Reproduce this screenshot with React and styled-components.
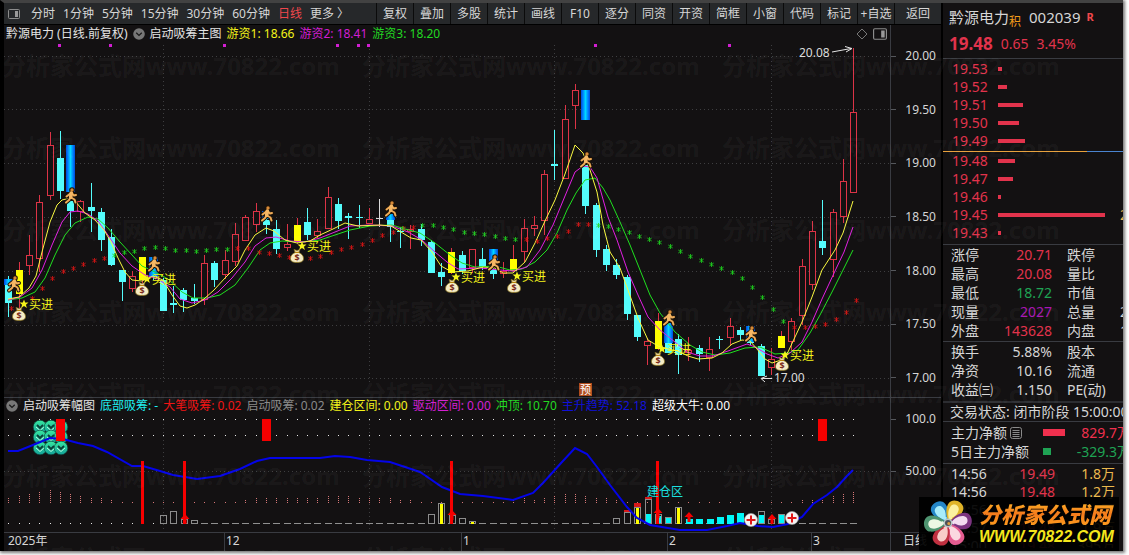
import React from 'react';
import styled, { createGlobalStyle, css } from 'styled-components';

const colors = {
  bg: '#131112',
  line: '#393b41',
  text: '#d6d6d6',
  red: '#e2334c',
  green: '#1fa354',
  cyan: '#54fcfc',
  yellow: '#ffff00',
  magenta: '#d21ed2',
  lime: '#22d822',
  gold: '#ecb94e',
};

const GlobalStyle = createGlobalStyle`
  * {
    box-sizing: border-box;
  }

  body {
    margin: 0;
    background: #fff;
    color: ${colors.text};
    font-family: 'Noto Sans', 'Noto Sans CJK SC', sans-serif;
    font-size: 12px;
    line-height: 16px;
  }

  svg {
    display: block;
    flex-shrink: 0;
  }

  svg text {
    font-family: 'Noto Sans', 'Noto Sans CJK SC', sans-serif;
  }
`;

const Frame = styled.div`
  position: relative;
  display: flex;
  overflow: hidden;
  background: ${colors.bg};
  border-top: 3px solid #424242;
  border-left: 4px solid #000;
`;

const Page = styled.div`
  overflow: hidden;
  padding-bottom: 4px;
`;

const Shadow = styled.div`
  margin-right: 6px;
  box-shadow: 1px 1px 3px 1px #777;
`;

const LeftPane = styled.main`
  flex: 1;
  min-width: 0;
`;

const Toolbar = styled.nav`
  display: flex;
  height: 22px;
  background: #0b0b0b;
  border-bottom: 1px solid #000;
`;

const Periods = styled.div`
  display: flex;
  flex: 1;
  align-items: center;
  gap: 8px;
  padding-left: 4px;
  background: #26282a;
  white-space: nowrap;

  svg {
    margin-right: 3px;
  }
`;

const PeriodButton = styled.button`
  padding: 0;
  border: 0;
  background: none;
  color: ${({ $active }) => ($active ? '#f0474c' : colors.text)};
  font: inherit;
`;

const Tools = styled.div`
  display: flex;
  gap: 1px;
  padding-left: 1px;
`;

const ToolButton = styled.button`
  width: ${({ $wide }) => ($wide ? 46 : 36)}px;
  padding: 0;
  border: 0;
  background: #26282a;
  color: ${colors.text};
  font: inherit;
  white-space: nowrap;
`;

const Panel = styled.section`
  display: flex;
  border-bottom: 1px solid ${colors.line};
`;

const Plot = styled.div`
  flex: 1;
  min-width: 0;
`;

const Legend = styled.header`
  display: flex;
  align-items: center;
  gap: 5px;
  height: ${({ $height }) => $height}px;
  padding: 0 3px 0 2px;
  white-space: nowrap;
`;

const LegendItem = styled.span`
  color: ${({ $color }) => $color || '#e4e4e4'};
`;

const Spacer = styled.div`
  flex: 1;
`;

const Chart = styled.svg`
  width: 100%;
  height: auto;
`;

const Axis = styled.div`
  display: flex;
  flex-direction: column;
  justify-content: space-between;
  width: 51px;
  padding: ${({ $pad }) => $pad};
  border-left: 1px solid ${colors.line};
`;

const AxisLabel = styled.div`
  display: flex;
  align-items: center;
  justify-content: space-between;
  padding-right: 5px;

  &::before {
    content: '';
    width: 5px;
    height: 1px;
    background: #55575c;
  }
`;

const DateAxis = styled.div`
  display: flex;
  height: 18px;
`;

const Months = styled.div`
  display: grid;
  flex: 1;
  grid-template-columns: 220fr 237fr 206fr 144fr 79fr;
`;

const Month = styled.span`
  padding-left: 1px;
  border-left: 1px solid ${colors.line};

  &:first-child {
    padding-left: 4px;
    border-left: 0;
  }
`;

const PeriodLabel = styled.span`
  width: 51px;
  padding-left: 12px;
  border-left: 1px solid ${colors.line};
  white-space: nowrap;
`;

const QuotePane = styled.aside`
  width: 182px;
  overflow: hidden;
  border-left: 2px solid #000;
  font-size: 14px;
`;

const QuoteHeader = styled.header`
  height: 56px;
  padding-left: 6px;
  border-bottom: 1px solid ${colors.line};
`;

const NameRow = styled.div`
  display: flex;
  align-items: center;
  height: 28px;
  font-size: 15px;
  line-height: 28px;
`;

const TagText = styled.span`
  align-self: flex-end;
  margin-right: 8px;
  color: #f09a1a;
  font-size: 12px;
  line-height: 18px;
`;

const MarketFlag = styled.b`
  padding-left: 6px;
  color: #f0474c;
  font-size: 11px;
`;

const PriceRow = styled.div`
  display: flex;
  align-items: center;
  gap: 8px;
  height: 25px;
  color: ${colors.red};

  b {
    font-size: 17px;
  }
`;

const OrderRows = styled.div`
  padding: ${({ $pad }) => $pad};
`;

const BookDivider = styled.div`
  height: 1px;
  background: linear-gradient(90deg, #e8a13c 80%, #4a84d0 80%);
`;

const BookRow = styled.div`
  display: grid;
  grid-template-columns: 46px 122px 20px;
  align-items: center;
  height: 18px;
  padding-left: 9px;
  color: ${colors.red};
`;

const VolumeBar = styled.div`
  height: 4px;
  background: ${colors.red};
`;

const Volume = styled.span`
  color: ${colors.gold};
`;

const StatsTable = styled.table`
  width: 240px;
  margin-top: 1px;
  border-collapse: collapse;
  border-top: 1px solid ${colors.line};
  table-layout: fixed;

  th,
  td {
    height: 19px;
    padding: 0;
    font-weight: normal;
    line-height: 19px;
    text-align: left;
    white-space: nowrap;
  }

  th:first-child {
    width: 52px;
    padding-left: 8px;
  }

  td:nth-child(2) {
    width: 57px;
    text-align: right;
  }

  th:nth-child(3) {
    width: 68px;
    padding-left: 15px;
  }
`;

const StatValue = styled.td`
  color: ${({ $color }) => $color || colors.text};
`;

const Status = styled.div`
  height: 21px;
  margin-top: 2px;
  padding-left: 7px;
  border-top: 2px solid #2c2d31;
  border-bottom: 1px solid ${colors.line};
  line-height: 18px;
  white-space: nowrap;
`;

const FlowRows = styled.div`
  padding: 1px 0 2px;
  border-bottom: 1px solid ${colors.line};
`;

const FlowRow = styled.div`
  display: grid;
  grid-template-columns: 92px 25px 63px;
  align-items: center;
  height: 19px;
  padding-left: 8px;
  color: ${({ $color }) => $color};
  white-space: nowrap;
`;

const FlowLabel = styled.span`
  display: flex;
  align-items: center;
  gap: 3px;
  color: ${colors.text};
`;

const FlowBar = styled.div`
  height: 7px;
  background: currentColor;
`;

const FlowValue = styled.span`
  text-align: right;
`;

const TickTable = styled.table`
  width: 172px;
  margin-top: 1px;
  border-collapse: collapse;

  td {
    height: 18px;
    padding: 0;
    line-height: 18px;
    text-align: right;
  }

  td:nth-child(1) {
    width: 52px;
    padding-left: 8px;
    text-align: left;
  }

  td:nth-child(2) {
    color: ${colors.red};
  }

  td:nth-child(3) {
    width: 60px;
    color: ${colors.gold};
  }
`;

// ticks past the bottom edge are cut off, not pushing the frame taller
const TickArea = styled.div`
  height: 84px;
  overflow: hidden;
`;

const Watermark = styled.div`
  position: absolute;
  inset: 22px 0 0 -2px;
  overflow: hidden;
  color: rgba(255, 255, 255, 0.05);
  font-size: 24px;
  font-weight: bold;
  line-height: 82px;
  pointer-events: none;
  white-space: nowrap;
`;

const WatermarkRow = styled.div`
  display: flex;
  height: 82px;

  span {
    flex: 0 0 360px;
  }
`;

const SiteLogo = styled.a`
  position: absolute;
  right: 4px;
  bottom: 0;
  display: flex;
  align-items: center;
  gap: 2px;
  width: 200px;
  height: 54px;
  background: rgba(0, 0, 0, 0.93);
  text-decoration: none;
`;

const gradientText = css`
  background: linear-gradient(#ffb627, #f47a1c 50%, #ffa01e);
  background-clip: text;
  -webkit-background-clip: text;
  color: transparent;
`;

const LogoName = styled.div`
  ${gradientText}
  font-size: 22px;
  font-style: italic;
  font-weight: 900;
  line-height: 26px;
`;

const LogoUrl = styled.div`
  color: #f4e61c;
  font-family: 'Liberation Sans', sans-serif;
  font-size: 16px;
  font-style: italic;
  font-weight: bold;
  line-height: 20px;
`;

const periods = ['分时', '1分钟', '5分钟', '15分钟', '30分钟', '60分钟', '日线', '更多 〉'];
const tools = ['复权', '叠加', '多股', '统计', '画线', 'F10', '逐分', '同资', '开资', '简框', '小窗', '代码', '标记', '+自选', '返回'];

const mainLegend = [
  ['游资1: 18.66', '#f4f41a'],
  ['游资2: 18.41', colors.magenta],
  ['游资3: 18.20', colors.lime],
];

const subLegend = [
  ['底部吸筹: -', '#1cf0f0'],
  ['大笔吸筹: 0.02', '#f01414'],
  ['启动吸筹: 0.02', '#8a8a8a'],
  ['建仓区间: 0.00', '#f4f41a'],
  ['驱动区间: 0.00', colors.magenta],
  ['冲顶: 10.70', colors.lime],
  ['主升趋势: 52.18', '#1010d8'],
  ['超级大牛: 0.00', '#fff'],
];

// kind, high, body top, body bottom, low
const candles = [
  ['c', 276, 279, 303, 317], ['y', 262, 270, 294, 308], ['r', 235, 255, 266, 275], ['r', 195, 202, 259, 272],
  ['r', 132, 145, 196, 200], ['c', 131, 158, 191, 199], ['c', 192, 201, 211, 227], ['r', 200, 201, 212, 222],
  ['c', 183, 207, 211, 232], ['c', 208, 212, 240, 251], ['c', 229, 237, 265, 266], ['c', 270, 270, 282, 301],
  ['r', 271, 276, 289, 292], ['y', 257, 257, 280, 284], ['c', 257, 269, 275, 280], ['c', 278, 280, 311, 311],
  ['c', 286, 303, 305, 313], ['c', 288, 290, 300, 312], ['c', 284, 298, 301, 304], ['r', 255, 263, 300, 305],
  ['c', 261, 263, 280, 287], ['r', 250, 260, 275, 279], ['r', 223, 234, 262, 266], ['r', 215, 217, 241, 241],
  ['r', 203, 211, 225, 232], ['c', 214, 220, 225, 234], ['c', 220, 229, 249, 254], ['r', 224, 244, 248, 251],
  ['y', 218, 225, 242, 244], ['c', 208, 222, 235, 240], ['r', 219, 231, 236, 238], ['r', 187, 197, 229, 229],
  ['c', 198, 204, 221, 229], ['c', 213, 216, 218, 239], ['c', 205, 217, 218, 228], ['r', 208, 219, 224, 224],
  ['w', 199, 218, 219, 227], ['c', 214, 215, 227, 242], ['c', 227, 231, 232, 248], ['r', 225, 229, 232, 249],
  ['c', 224, 229, 240, 246], ['c', 240, 242, 273, 273], ['c', 263, 272, 277, 286], ['y', 248, 252, 273, 274],
  ['c', 251, 255, 271, 274], ['r', 249, 249, 268, 273], ['c', 248, 259, 267, 270], ['c', 249, 269, 274, 279],
  ['r', 262, 271, 274, 278], ['y', 245, 259, 271, 272], ['r', 219, 228, 252, 262], ['r', 216, 225, 229, 236],
  ['r', 170, 174, 221, 235], ['c', 130, 164, 166, 180], ['r', 105, 119, 179, 179], ['r', 84, 90, 106, 129],
  ['c', 152, 165, 206, 214], ['c', 203, 205, 250, 257], ['c', 245, 249, 265, 271], ['c', 259, 265, 275, 279],
  ['c', 275, 277, 314, 320], ['c', 315, 315, 337, 341], ['r', 338, 341, 346, 365], ['y', 313, 321, 349, 350],
  ['c', 323, 342, 353, 353], ['c', 334, 339, 355, 374], ['r', 337, 350, 353, 361], ['c', 345, 348, 354, 362],
  ['r', 337, 349, 358, 371], ['c', 336, 339, 340, 349], ['r', 318, 326, 338, 346], ['c', 327, 330, 335, 340],
  ['c', 326, 341, 343, 345], ['c', 344, 346, 376, 376], ['r', 348, 359, 368, 375], ['y', 331, 336, 348, 348],
  ['r', 318, 321, 342, 350], ['r', 259, 266, 316, 325], ['r', 221, 231, 285, 290], ['c', 200, 241, 248, 255],
  ['r', 209, 212, 260, 277], ['r', 159, 181, 217, 223], ['r', 48, 112, 193, 193],
];

const candleColors = { c: colors.cyan, r: '#dc3346', y: colors.yellow, w: '#dadada' };
const candleX = (i) => Math.round(8.3 + 10.305 * i);

const yellowLine = '8,299 19,297 29,288 36,276 42,252 50,222 57,205 62,200 70,198 75,201 85,213 95,220 104,230 111,242 118,258 125,272 132,280 142,281 153,276 163,280 172,295 180,306 187,308 195,305 204,299 214,290 225,278 237,266 245,250 255,235 266,228 274,231 285,240 297,243 310,241 320,235 333,229 345,223 358,226 380,225 391,226 401,232 411,238 421,240 432,252 441,266 452,272 468,271 483,267 495,268 503,273 513,273 525,262 535,243 545,221 555,200 565,174 575,145 583,153 590,170 597,192 603,225 610,252 620,268 628,290 638,318 648,340 658,346 668,349 678,351 688,356 698,359 712,358 722,353 732,344 742,340 750,341 757,349 765,359 772,363 781,360 788,352 802,322 812,297 822,270 835,250 843,233 853,201';
const magentaLine = '8,300 20,297 32,288 42,270 52,245 62,222 70,212 78,211 88,214 98,221 110,238 120,253 132,266 145,275 158,279 170,287 180,299 192,303 205,300 218,292 232,278 245,262 255,246 266,238 276,237 290,241 305,242 320,238 335,232 350,226 370,225 392,226 408,232 422,240 435,252 447,262 458,269 480,268 500,270 513,271 527,267 540,250 553,225 565,196 575,172 583,166 590,167 597,178 608,217 617,240 628,272 638,295 648,317 660,330 670,338 687,352 700,356 713,356 728,351 747,344 755,347 767,354 778,358 790,353 802,342 812,322 822,299 835,271 844,252 853,227';
const greenLine = '8,300 22,298 35,292 45,278 55,255 65,235 75,223 88,217 98,219 108,228 120,242 132,255 142,266 155,272 168,279 182,292 193,298 207,298 220,295 235,285 248,268 260,250 270,243 282,241 300,242 320,240 335,235 350,230 370,226 392,225 405,229 420,233 435,243 450,255 462,263 475,267 495,266 510,270 522,269 535,262 547,250 557,233 567,210 576,193 585,180 595,178 603,188 610,200 620,222 630,245 640,270 650,295 660,313 675,332 690,345 702,352 715,355 730,353 745,348 760,347 775,354 788,353 798,350 810,333 820,315 832,292 843,270 853,250';
const trendLine = '8,451 18,451 33,445 50,438 63,439 78,443 93,446 107,452 132,466 143,466 160,471 173,475 197,479 220,476 240,469 257,461 270,458 320,458 335,456 350,457 367,460 390,462 420,472 442,487 460,494 483,496 513,500 533,493 543,483 562,462 575,448 587,454 597,467 610,485 627,507 637,518 650,525 680,530 707,530 727,526 740,523 758,526 773,527 788,524 802,517 813,504 827,495 837,487 847,476 853,470';

const redStars = [
  [11, 308], [32, 298], [42, 288], [52, 278], [63, 271], [73, 268], [83, 264], [94, 260], [104, 258],
  [237, 248], [248, 248], [259, 252], [269, 253], [279, 255], [289, 257], [300, 258], [310, 258], [320, 256],
  [331, 252], [341, 249], [351, 247], [362, 244], [372, 240], [382, 235], [393, 232], [403, 228], [413, 227],
  [526, 239], [537, 241], [547, 238], [557, 236], [568, 231], [578, 224], [588, 224],
  [794, 327], [805, 327], [815, 326], [825, 324], [836, 319], [846, 312], [856, 300],
];
const greenStars = [
  [114, 255], [124, 252], [134, 251], [144, 248], [155, 247], [165, 248], [175, 250], [186, 250], [196, 251],
  [206, 250], [216, 249], [227, 249], [402, 228], [422, 225], [433, 225], [443, 227], [453, 229], [464, 232],
  [474, 233], [484, 234], [495, 236], [505, 238], [515, 239], [598, 225], [608, 226], [618, 229], [629, 232],
  [639, 236], [649, 239], [659, 242], [670, 246], [680, 251], [690, 256], [701, 260], [711, 264], [721, 268],
  [732, 272], [742, 278], [752, 287], [762, 297], [773, 309], [783, 321],
];

const blueBars = [[8, 279, 6], [70, 145, 47], [153, 257, 20], [266, 211, 8], [390, 214, 6], [493, 249, 16], [585, 90, 30], [668, 323, 20], [750, 326, 16]];
const runners = [[14, 284], [71, 196], [154, 264], [267, 214], [391, 209], [494, 263], [586, 160], [669, 318], [751, 334]];
const bags = [[19, 314], [142, 289], [297, 256], [452, 286], [514, 286], [658, 359], [782, 364]];
const buys = [[25, 304], [148, 279], [303, 246], [457, 277], [518, 276], [663, 349], [786, 355]];

// x, top, fill ('' for outline only)
const volumeBars = [
  [163, 515, ''], [173, 511, ''], [184, 519, ''], [194, 520, ''],
  [431, 514, ''], [441, 503, colors.yellow], [452, 515, ''], [462, 518, ''], [472, 521, colors.yellow],
  [616, 518, ''], [627, 512, ''], [637, 507, colors.yellow], [648, 499, ''], [658, 514, ''],
  [668, 517, ''], [678, 507, colors.yellow], [761, 511, ''], [771, 519, ''], [781, 514, ''],
];
const cyanBars = [[648, 514], [658, 516], [668, 518], [689, 519], [699, 519], [710, 519], [720, 517], [730, 515], [740, 513], [761, 515], [781, 514]];
const redArrows = [[185, 514], [452, 510], [658, 508], [689, 512], [772, 514]];
const momentum = [6, 7, 9, 11, 14, 12, 9, 7, 6, 5, 3, 2, 2, 2, 1, 1, 1, 1, 1, 1, 1, 2, 2, 3, 5, 5, 5, 5, 5, 5, 6, 7, 8, 7, 6, 5, 5, 5, 4, 3, 2, 1, 1, 1, 1, 1, 1, 1, 1, 3, 5, 4, 6, 7, 9, 10, 7, 6, 5, 3, 2, 2, 1, 1, 1, 1, 1, 1, 1, 1, 1, 1, 1, 1, 1, 1, 2, 3, 4, 4, 7, 9, 12];

const asks = [['19.53', 4], ['19.52', 9], ['19.51', 25], ['19.50', 21], ['19.49', 27]];
const bids = [['19.48', 17], ['19.47', 15], ['19.46', 3], ['19.45', 107, '2'], ['19.43', 3]];

const priceStats = [
  ['涨停', '20.71', colors.red, '跌停'],
  ['最高', '20.08', colors.red, '量比'],
  ['最低', '18.72', colors.green, '市值'],
  ['现量', '2027', '#a815b4', '总量', '2'],
  ['外盘', '143628', colors.red, '内盘', '1'],
];
const baseStats = [
  ['换手', '5.88%', '', '股本'],
  ['净资', '10.16', '', '流通'],
  ['收益㈢', '1.150', '', 'PE(动)'],
];
const ticks = [
  ['14:56', '19.49', '1.8万'],
  ['14:56', '19.48', '1.2万'],
  ['14:56', '19.49', '1.3万'],
  ['14:57', '19.48', '1.9万'],
  ['15:00', '19.48', '395万'],
];

const LayoutIcon = ({ size = 12 }) => (
  <svg width={size} height={size} viewBox="0 0 12 12" fill="none" stroke="#8c8c8c">
    <rect x="0.5" y="1.5" width="11" height="9" rx="1" />
    <rect x="7" y="3" width="3" height="6" fill="#9a9a9a" stroke="none" />
  </svg>
);

const ChevronIcon = () => (
  <svg width="12" height="12" viewBox="0 0 13 13">
    <circle cx="6.5" cy="6.5" r="6.3" fill="#777" />
    <path d="M3.5 5.2 6.5 8l3-2.8" fill="none" stroke="#1a1a1a" strokeWidth="1.4" />
  </svg>
);

const DiamondIcon = () => (
  <svg width="12" height="12" viewBox="0 0 12 12">
    <path d="M6 1 11 6 6 11 1 6Z" fill="none" stroke="#777" />
  </svg>
);

const NoteIcon = () => (
  <svg width="12" height="12" viewBox="0 0 12 12" stroke="#8a8a8a" fill="none">
    <rect x="0.5" y="0.5" width="11" height="11" rx="2" />
    <path d="M2.5 3.5h7M2.5 5.5h7M2.5 7.5h7M2.5 9.5h7" />
  </svg>
);

const Candle = ({ index, data }) => {
  const [kind, high, top, bottom, low] = data;
  const x = candleX(index);
  const color = candleColors[kind];
  const height = Math.max(bottom - top, 1);
  return (
    <g shapeRendering="crispEdges">
      <rect x={x} y={high} width="1" height={top - high} fill={kind === 'y' ? candleColors.r : color} />
      <rect x={x} y={bottom} width="1" height={low - bottom} fill={kind === 'y' ? candleColors.r : color} />
      {kind === 'r' ? (
        <rect x={x - 2.5} y={top + 0.5} width="6" height={Math.max(height - 1, 1)} fill={colors.bg} stroke={color} />
      ) : (
        <rect x={x - 3} y={top} width="7" height={height} fill={color} />
      )}
    </g>
  );
};

const Star = ({ x, y, color }) => (
  <path
    d={`M${x + 0.5} ${y - 2}v5M${x - 1.7} ${y - 1}l4.4 3M${x - 1.7} ${y + 2}l4.4-3`}
    stroke={color}
    strokeWidth="0.8"
  />
);

const runnerBody = 'M0.5-3.5-0.5 1.5M0-3-4.5 0.5M0.5-3 3-0.5 5-1M-0.5 1.5-2 4-5 6.5M0 1.5 3.5 3.5 4.5 6.5';

const Runner = ({ x, y }) => (
  <g transform={`translate(${x} ${y})`} fill="none" strokeLinejoin="round" strokeLinecap="round">
    <path d={runnerBody} stroke="#1c1208" strokeWidth="4" />
    <circle cx="1" cy="-6" r="2.8" fill="#1c1208" />
    <path d={runnerBody} stroke="#f0ac58" strokeWidth="2" />
    <path d="M0.3-3-0.3 1.2" stroke="#f6b866" strokeWidth="3.6" />
    <circle cx="1" cy="-6" r="1.7" fill="#d88a38" />
  </g>
);

const MoneyBag = ({ x, y }) => (
  <g transform={`translate(${x} ${y})`}>
    <path d="M-3-6.5 0-5.5 3-6.5 1.8-3.5C5-2 6.5 0 6.5 2.5 6.5 5.5 4 6.5 0 6.5S-6.5 5.5-6.5 2.5C-6.5 0-5-2-1.8-3.5Z" fill="#f5ecc4" stroke="#8a7420" strokeWidth="0.8" />
    <path d="M-2-3.6h4" stroke="#b8860b" strokeWidth="1.2" />
    <text y="5" textAnchor="middle" fontSize="9" fontWeight="bold" fill="#7c2a1a">$</text>
  </g>
);

const BuyMark = ({ x, y }) => (
  <g fill="#f4f41a">
    <path transform={`translate(${x - 1} ${y})`} d="M0-4.5 1.2-1.4 4.5-1.4 1.9.7 2.9 4 0 2-2.9 4-1.9.7-4.5-1.4-1.2-1.4Z" />
    <text x={x + 4} y={y + 5} fontSize="12">买进</text>
  </g>
);

const CheckBall = ({ x, y }) => (
  <g fill="none">
    <circle cx={x} cy={y} r="6.8" fill="url(#ball)" stroke="#0c3c34" strokeWidth="0.6" />
    <path d={`M${x - 3} ${y - 2}l3 3 3-3`} stroke="#0a4038" strokeWidth="1.8" />
    <path d={`M${x - 4} ${y}l4 3.5 4-3.5`} stroke="#b8fce0" strokeWidth="1" />
  </g>
);

const RescueMark = ({ x, y }) => (
  <g>
    <circle cx={x} cy={y} r="6.5" fill="#f4f4f4" stroke="#aaa" strokeWidth="0.6" />
    <path d={`M${x} ${y - 4.5}v9M${x - 4.5} ${y}h9`} stroke="#e01818" strokeWidth="2" />
  </g>
);

const gridX = [163.5, 369.5, 554.5, 771.5];

const MainChart = () => (
  <Chart viewBox="4 42 886 355" role="img" aria-label="启动吸筹主图">
    <defs>
      <linearGradient id="bluebar">
        <stop offset="0" stopColor="#0048e0" />
        <stop offset="0.3" stopColor="#0098ff" />
        <stop offset="0.5" stopColor="#00d8ff" />
        <stop offset="0.7" stopColor="#0098ff" />
        <stop offset="1" stopColor="#0048e0" />
      </linearGradient>
    </defs>
    <g stroke="#3e3e40" strokeDasharray="1 3" shapeRendering="crispEdges">
      {[56.5, 109.5, 163.5, 217.5, 271.5, 325.5, 378.5].map((y) => <path key={y} d={`M4 ${y}H890`} />)}
      {gridX.map((x) => <path key={x} d={`M${x} 45V385`} />)}
    </g>
    {[59, 110, 224, 337, 358, 368, 595, 729].map((x) => <rect key={x} x={x - 1} y="44" width="3" height="3" fill="#d21ed2" />)}
    {candles.map((c, i) => <Candle key={i} index={i} data={c} />)}
    {blueBars.map(([x, y, h]) => <rect key={x} x={x - 4} y={y} width="9" height={h} fill="url(#bluebar)" />)}
    <g fill="none" strokeWidth="1">
      <polyline points={greenLine} stroke="#1fe01f" />
      <polyline points={magentaLine} stroke="#e21fe2" />
      <polyline points={yellowLine} stroke="#f8f840" />
    </g>
    {redStars.map(([x, y]) => <Star key={x} x={x} y={y} color="#e01414" />)}
    {greenStars.map(([x, y]) => <Star key={x} x={x} y={y} color="#1ed81e" />)}
    {bags.map(([x, y]) => <MoneyBag key={x} x={x} y={y} />)}
    {buys.map(([x, y]) => <BuyMark key={x} x={x} y={y} />)}
    {runners.map(([x, y]) => <Runner key={x} x={x} y={y} />)}
    <g fill="none" stroke="#e4e4e4">
      <path d="M832 52 851 48.5M845 46.5 852 48.5 846 52" />
      <path d="M772 378.5H762M767 376 761 378.5 765 382" />
    </g>
    <text x="799" y="57" fontSize="12" fill="#dcdcdc">20.08</text>
    <text x="774" y="382" fontSize="12" fill="#dcdcdc">17.00</text>
    <rect x="579" y="383" width="13" height="13" fill="#b04c1c" />
    <text x="580" y="394" fontSize="11" fill="#fff">预</text>
  </Chart>
);

const SubChart = () => (
  <Chart viewBox="4 414 886 118" role="img" aria-label="启动吸筹幅图">
    <defs>
      <linearGradient id="ball" x2="0" y2="1">
        <stop offset="0" stopColor="#38e8a0" />
        <stop offset="1" stopColor="#12a098" />
      </linearGradient>
    </defs>
    <g stroke="#3e3e40" strokeDasharray="1 3" shapeRendering="crispEdges">
      <path d="M4 471.5H890" />
      {gridX.map((x) => <path key={x} d={`M${x} 420V532`} />)}
    </g>
    <g shapeRendering="crispEdges">
      {candles.map((c, i) => (
        <g key={i} fill="#e8e8e8">
          <rect x={candleX(i)} y="419" width="1" height="1" />
          <rect x={candleX(i)} y="435" width="1" height="1" />
          <rect x={candleX(i) - (i > 18 ? 3 : 0)} y="523" width={i > 18 ? 7 : 1} height="1" fill={i > 18 ? '#909090' : '#e8e8e8'} />
          <path d={`M${candleX(i) + 0.5} 503v-${momentum[i]}`} stroke="#d87878" strokeDasharray="1 1" />
        </g>
      ))}
      {cyanBars.map(([x, y]) => <rect key={x} x={x - 3} y={y} width="7" height={524 - y} fill="#00f8f8" />)}
      {volumeBars.map(([x, y, fill]) => (
        <g key={x}>
          <rect x={x - 2.5} y={y + 0.5} width="6" height={523 - y} fill="none" stroke="#8c8c8c" />
          {fill && <rect x={x - 1} y={y + 1} width="3" height={523 - y} fill={fill} />}
        </g>
      ))}
      <rect x="624" y="510" width="7" height="2" fill="#d81818" />
      <rect x="634" y="503" width="7" height="4" fill="#d81818" />
      <rect x="645" y="497" width="7" height="2" fill="#d81818" />
    </g>
    {[427, 437, 448].map((y) => [40, 51, 61].map((x) => <CheckBall key={`${x}-${y}`} x={x} y={y} />))}
    <polyline points={trendLine} fill="none" stroke="#0404e8" strokeWidth="2" />
    <g fill="#f60000">
      {[142, 184, 451, 657].map((x) => <rect key={x} x={x - 1} y="461" width="3" height="63" />)}
      {[56, 262, 818].map((x) => <rect key={x} x={x} y="419" width="9" height="22" />)}
      {redArrows.map(([x, y]) => <path key={x} d={`M${x} ${y}l4.5 5h-3v5h-3v-5h-3Z`} />)}
    </g>
    <RescueMark x={751} y={520} />
    <RescueMark x={792} y={518} />
    <text x="647" y="496" fontSize="12" fill="#1ce0e0">建仓区</text>
  </Chart>
);

const petals = [
  [-33, '#2486c8', '#a8ecfa'],
  [26, '#e0b428', '#fbf0a0'],
  [83, '#7c3480', '#f4dcf0'],
  [150, '#e45c90', '#fbd8e0'],
  [206, '#c03040', '#f8ccc8'],
  [268, '#4e9470', '#ecf8e4'],
];

const FlowerLogo = () => (
  <svg width="58" height="54" viewBox="-29 -26 58 54">
    {petals.map(([angle, color, light]) => (
      <g key={angle} transform={`rotate(${angle})`}>
        <path d="M0-1C-4-5-9-11-8-18-7-26 7-26 8-18 9-11 4-5 0-1Z" fill={color} />
        <path d="M0-3C-3-6-6-11-5-16-4-21 3-21 4-16 5-11 3-6 0-3Z" fill={light} />
        <path d="M4-19C7-15 5-10 2-6" fill="none" stroke={color} strokeWidth="1.5" />
      </g>
    ))}
    <circle r="4.5" fill="#b8c8c8" />
    <circle r="3" fill="#4c5058" />
    <circle cx="0.8" cy="0.5" r="1.5" fill="#e0a040" />
  </svg>
);

const OrderBook = ({ rows, pad }) => (
  <OrderRows $pad={pad}>
    {rows.map(([price, size, volume]) => (
      <BookRow key={price}>
        <span>{price}</span>
        <VolumeBar style={{ width: size }} />
        <Volume>{volume}</Volume>
      </BookRow>
    ))}
  </OrderRows>
);

const Stats = ({ rows }) => (
  <StatsTable>
    <tbody>
      {rows.map(([label, value, color, label2, value2]) => (
        <tr key={label}>
          <th>{label}</th>
          <StatValue $color={color}>{value}</StatValue>
          <th>{label2}</th>
          <td>{value2}</td>
        </tr>
      ))}
    </tbody>
  </StatsTable>
);

const App = () => {
  return (
    <Page>
      <GlobalStyle />
      <Shadow>
        <Frame>
          <LeftPane>
            <Toolbar>
              <Periods>
                <LayoutIcon />
                {periods.map((name) => (
                  <PeriodButton key={name} $active={name === '日线'}>{name}</PeriodButton>
                ))}
              </Periods>
              <Tools>
                {tools.map((name) => (
                  <ToolButton key={name} $wide={name === '返回'}>{name}</ToolButton>
                ))}
              </Tools>
            </Toolbar>

            <Panel>
              <Plot>
                <Legend $height={17}>
                  <LegendItem>黔源电力 (日线.前复权)</LegendItem>
                  <ChevronIcon />
                  <LegendItem>启动吸筹主图</LegendItem>
                  {mainLegend.map(([text, color]) => <LegendItem key={text} $color={color}>{text}</LegendItem>)}
                  <Spacer />
                  <DiamondIcon />
                  <LayoutIcon size={14} />
                </Legend>
                <MainChart />
              </Plot>
              <Axis $pad="23px 0 11px">
                {['20.00', '19.50', '19.00', '18.50', '18.00', '17.50', '17.00'].map((p) => <AxisLabel key={p}>{p}</AxisLabel>)}
              </Axis>
            </Panel>

            <Panel>
              <Plot>
                <Legend $height={16}>
                  <ChevronIcon />
                  <LegendItem>启动吸筹幅图</LegendItem>
                  {subLegend.map(([text, color]) => <LegendItem key={text} $color={color}>{text}</LegendItem>)}
                </Legend>
                <SubChart />
              </Plot>
              <Axis $pad="13px 0 53px">
                <AxisLabel>100.0</AxisLabel>
                <AxisLabel>50.00</AxisLabel>
              </Axis>
            </Panel>

            <DateAxis>
              <Months>
                {['2025年', '12', '1', '2', '3'].map((m) => <Month key={m}>{m}</Month>)}
              </Months>
              <PeriodLabel>日线</PeriodLabel>
            </DateAxis>
          </LeftPane>

          <QuotePane>
            <QuoteHeader>
              <NameRow>
                <span>黔源电力</span>
                <TagText>积</TagText>
                <span>002039</span>
                <MarketFlag>R</MarketFlag>
              </NameRow>
              <PriceRow>
                <b>19.48</b>
                <span>0.65</span>
                <span>3.45%</span>
              </PriceRow>
            </QuoteHeader>
            <OrderBook rows={asks} pad="1px 0" />
            <BookDivider />
            <OrderBook rows={bids} pad="0 0 1px" />
            <Stats rows={priceStats} />
            <Stats rows={baseStats} />
            <Status>交易状态: 闭市阶段 15:00:00</Status>
            <FlowRows>
              <FlowRow $color="#f0304e">
                <FlowLabel>主力净额<NoteIcon /></FlowLabel>
                <FlowBar style={{ width: 22 }} />
                <FlowValue>829.7万</FlowValue>
              </FlowRow>
              <FlowRow $color={colors.green}>
                <FlowLabel>5日主力净额</FlowLabel>
                <FlowBar style={{ width: 8 }} />
                <FlowValue>-329.3万</FlowValue>
              </FlowRow>
            </FlowRows>
            <TickArea>
              <TickTable>
                <tbody>
                  {ticks.map(([time, price, amount], i) => (
                    <tr key={i}>
                      <td>{time}</td>
                      <td>{price}</td>
                      <td>{amount}</td>
                    </tr>
                  ))}
                </tbody>
              </TickTable>
            </TickArea>
          </QuotePane>

          <Watermark aria-hidden="true">
            {[0, 1, 2, 3, 4, 5, 6].map((row) => (
              <WatermarkRow key={row}>
                {[0, 1, 2].map((col) => <span key={col}>分析家公式网www.70822.com</span>)}
              </WatermarkRow>
            ))}
          </Watermark>

          <SiteLogo href="#">
            <FlowerLogo />
            <div>
              <LogoName>分析家公式网</LogoName>
              <LogoUrl>WWW.70822.COM</LogoUrl>
            </div>
          </SiteLogo>
        </Frame>
      </Shadow>
    </Page>
  );
};

export default App;
